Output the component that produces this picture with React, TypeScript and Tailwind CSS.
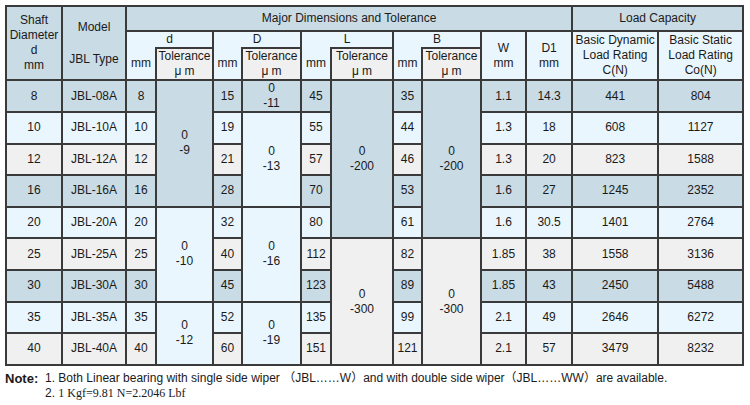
import React from "react";

const A = "bg-[#c9dbe5]";
const B = "bg-[#eaf6fd]";
const C = "bg-[#f0f0f0]";
const rowBg = [A, B, C];

const rows = [
  ["8", "JBL-08A", "8", "15", "45", "35", "1.1", "14.3", "441", "804"],
  ["10", "JBL-10A", "10", "19", "55", "44", "1.3", "18", "608", "1127"],
  ["12", "JBL-12A", "12", "21", "57", "46", "1.3", "20", "823", "1588"],
  ["16", "JBL-16A", "16", "28", "70", "53", "1.6", "27", "1245", "2352"],
  ["20", "JBL-20A", "20", "32", "80", "61", "1.6", "30.5", "1401", "2764"],
  ["25", "JBL-25A", "25", "40", "112", "82", "1.85", "38", "1558", "3136"],
  ["30", "JBL-30A", "30", "45", "123", "89", "1.85", "43", "2450", "5488"],
  ["35", "JBL-35A", "35", "52", "135", "99", "2.1", "49", "2646", "6272"],
  ["40", "JBL-40A", "40", "60", "151", "121", "2.1", "57", "3479", "8232"],
];

type Tol = Record<number, [number, string, string]>;
const tolD: Tol = { 0: [4, "-9", A], 4: [3, "-10", B], 7: [2, "-12", B] };
const tolDD: Tol = { 0: [1, "-11", A], 1: [3, "-13", B], 4: [3, "-16", B], 7: [2, "-19", B] };
const tolL: Tol = { 0: [5, "-200", A], 5: [4, "-300", C] };
const tolB: Tol = { 0: [5, "-200", A], 5: [4, "-300", C] };

const cell = "border-2 border-[#3a3a3a] text-center align-middle p-0 font-normal";

function TolCell({ t, i }: { t: Tol; i: number }) {
  const v = t[i];
  if (!v) return null;
  return (
    <td rowSpan={v[0]} className={`${cell} ${v[2]}`}>
      0<br />
      {v[1]}
    </td>
  );
}

function TolHead() {
  return (
    <th className={`${cell} ${C}`}>
      Tolerance
      <br />μ m
    </th>
  );
}

export default function App() {
  const widths = [56, 64, 30, 57, 29, 59, 30, 62, 29, 59, 45, 46, 86, 85];
  return (
    <div
      className="w-[750px] h-[405px] bg-white pl-[5px] pt-[5px] text-[#1a1a1a]"
      style={{ fontFamily: '"Liberation Sans", Arial, "Noto Sans CJK SC", sans-serif' }}
    >
      <table className="table-fixed border-collapse w-[737px] text-[12px] leading-[15px]">
        <colgroup>
          {widths.map((w, i) => (
            <col key={i} style={{ width: w }} />
          ))}
        </colgroup>
        <thead>
          <tr className="h-[25px]">
            <th rowSpan={3} className={`${cell} ${A}`}>
              Shaft
              <br />
              Diameter
              <br />d<br />
              mm
            </th>
            <th rowSpan={3} className={`${cell} ${A} leading-[16px]`}>
              Model
              <br />
              <br />
              JBL Type
            </th>
            <th colSpan={10} className={`${cell} ${A}`}>
              Major Dimensions and Tolerance
            </th>
            <th colSpan={2} className={`${cell} ${A}`}>
              Load Capacity
            </th>
          </tr>
          <tr className="h-[15px]">
            <th colSpan={2} className={`${cell} ${B} border-b-0`}>d</th>
            <th colSpan={2} className={`${cell} ${B} border-b-0`}>D</th>
            <th colSpan={2} className={`${cell} ${B} border-b-0`}>L</th>
            <th colSpan={2} className={`${cell} ${B} border-b-0`}>B</th>
            <th rowSpan={2} className={`${cell} ${B}`}>
              W<br />
              mm
            </th>
            <th rowSpan={2} className={`${cell} ${B}`}>
              D1
              <br />
              mm
            </th>
            <th rowSpan={2} className={`${cell} ${B}`}>
              Basic Dynamic
              <br />
              Load Rating
              <br />
              C(N)
            </th>
            <th rowSpan={2} className={`${cell} ${B}`}>
              Basic Static
              <br />
              Load Rating
              <br />
              Co(N)
            </th>
          </tr>
          <tr className="h-[30px]">
            <th className={`${cell} ${B} border-t-0`}>mm</th>
            <TolHead />
            <th className={`${cell} ${B} border-t-0`}>mm</th>
            <TolHead />
            <th className={`${cell} ${B} border-t-0`}>mm</th>
            <TolHead />
            <th className={`${cell} ${B} border-t-0`}>mm</th>
            <TolHead />
          </tr>
        </thead>
        <tbody>
          {rows.map((r, i) => {
            const bg = rowBg[i % 3];
            return (
              <tr key={i} className="h-[31.6px]">
                <td className={`${cell} ${bg}`}>{r[0]}</td>
                <td className={`${cell} ${bg}`}>{r[1]}</td>
                <td className={`${cell} ${bg}`}>{r[2]}</td>
                <TolCell t={tolD} i={i} />
                <td className={`${cell} ${bg}`}>{r[3]}</td>
                <TolCell t={tolDD} i={i} />
                <td className={`${cell} ${bg}`}>{r[4]}</td>
                <TolCell t={tolL} i={i} />
                <td className={`${cell} ${bg}`}>{r[5]}</td>
                <TolCell t={tolB} i={i} />
                <td className={`${cell} ${bg}`}>{r[6]}</td>
                <td className={`${cell} ${bg}`}>{r[7]}</td>
                <td className={`${cell} ${bg}`}>{r[8]}</td>
                <td className={`${cell} ${bg}`}>{r[9]}</td>
              </tr>
            );
          })}
        </tbody>
      </table>
      <div className="mt-[5px] text-[12px] leading-[15px] flex">
        <span className="font-bold text-[13px] w-[40px] shrink-0">Note:</span>
        <div className="flex flex-col">
          <span>1. Both Linear bearing with single side wiper （JBL……W）and with double side wiper（JBL……WW）are available.</span>
          <span>
            2.{" "}
            <span style={{ fontFamily: '"Liberation Serif", "Times New Roman", serif' }}>
              1 Kgf=9.81 N=2.2046 Lbf
            </span>
          </span>
        </div>
      </div>
    </div>
  );
}
